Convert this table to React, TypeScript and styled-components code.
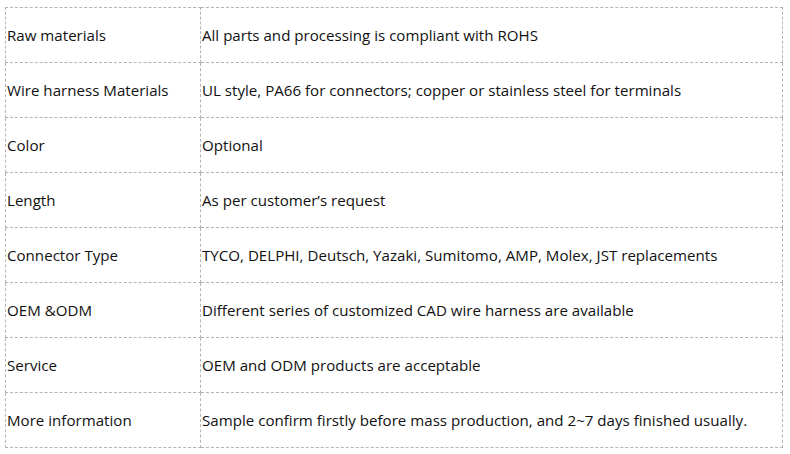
import React from "react";
import styled, { createGlobalStyle } from "styled-components";

const Global = createGlobalStyle`
  html, body { margin: 0; padding: 0; background: #fff; }
  body { font-family: "Segoe UI", "Open Sans", "Noto Sans", sans-serif; }
`;

const Page = styled.div`
  padding: 7px 0 0 5px;
`;

const Table = styled.table`
  border-collapse: collapse;
  width: 778px;
  table-layout: fixed;
  color: #111;
  font-size: 15.1px;
`;

const Cell = styled.td<{ $first?: boolean }>`
  border: 1px dashed #b4b4b4;
  height: 54px;
  padding: 0 0 0 1px;
  width: ${(p) => (p.$first ? "193px" : "auto")};
  vertical-align: middle;
  white-space: nowrap;
  line-height: 20px;
  letter-spacing: 0.01px;
`;

const rows: [string, string][] = [
  ["Raw materials", "All parts and processing is compliant with ROHS"],
  ["Wire harness Materials", "UL style, PA66 for connectors; copper or stainless steel for terminals"],
  ["Color", "Optional"],
  ["Length", "As per customer\u2019s request"],
  ["Connector Type", "TYCO, DELPHI, Deutsch, Yazaki, Sumitomo, AMP, Molex, JST replacements"],
  ["OEM &ODM", "Different series of customized CAD wire harness are available"],
  ["Service", "OEM and ODM products are acceptable"],
  ["More information", "Sample confirm firstly before mass production, and 2~7 days finished usually."],
];

export default function App() {
  return (
    <Page>
      <Global />
      <Table>
        <tbody>
          {rows.map(([k, v]) => (
            <tr key={k}>
              <Cell $first>{k}</Cell>
              <Cell>{v}</Cell>
            </tr>
          ))}
        </tbody>
      </Table>
    </Page>
  );
}
